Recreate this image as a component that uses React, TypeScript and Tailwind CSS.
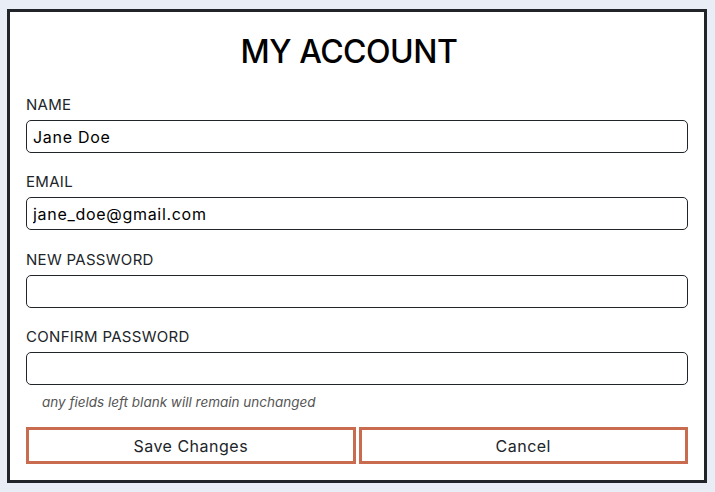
import React from 'react';

const fields = [
  { label: 'NAME', value: 'Jane Doe', type: 'text', gap: 'mt-[23px]' },
  { label: 'EMAIL', value: 'jane_doe@gmail.com', type: 'email', gap: 'mt-[19px]' },
  { label: 'NEW PASSWORD', value: '', type: 'password', gap: 'mt-[20px]' },
  { label: 'CONFIRM PASSWORD', value: '', type: 'password', gap: 'mt-[19px]' },
];

export default function App() {
  return (
    <div className="min-h-screen bg-[#e9eef6] pt-[9px] font-['Inter',sans-serif]">
      <div className="ml-[7px] h-[474px] w-[700px] border-[3px] border-[#212529] bg-white px-[16px]">
        <h1 className="pt-[20px] pr-[16px] text-center text-[32px] font-medium leading-[40px] tracking-[-0.5px] text-black">
          MY ACCOUNT
        </h1>

        {fields.map((f) => (
          <div key={f.label} className={f.gap}>
            <label className="block text-[15px] leading-[20px] tracking-[0.3px] text-[#212529]">{f.label}</label>
            <input
              type={f.type}
              defaultValue={f.value}
              className="mt-[5px] block h-[33px] w-full rounded-[5px] border border-[#212529] px-[6px] text-[16px] tracking-[0.7px] text-black outline-none"
            />
          </div>
        ))}

        <p className="mt-[8px] pl-[16px] text-[13.5px] leading-[18px] italic text-[#555]">
          any fields left blank will remain unchanged
        </p>

        <div className="mt-[16px] grid grid-cols-2 gap-[3px]">
          <button className="h-[37px] border-[3px] border-[#c96b4f] bg-white text-[16px] tracking-[0.5px] text-[#212529]">
            Save Changes
          </button>
          <button className="h-[37px] border-[3px] border-[#c96b4f] bg-white text-[16px] tracking-[0.5px] text-[#212529]">
            Cancel
          </button>
        </div>
      </div>
    </div>
  );
}
